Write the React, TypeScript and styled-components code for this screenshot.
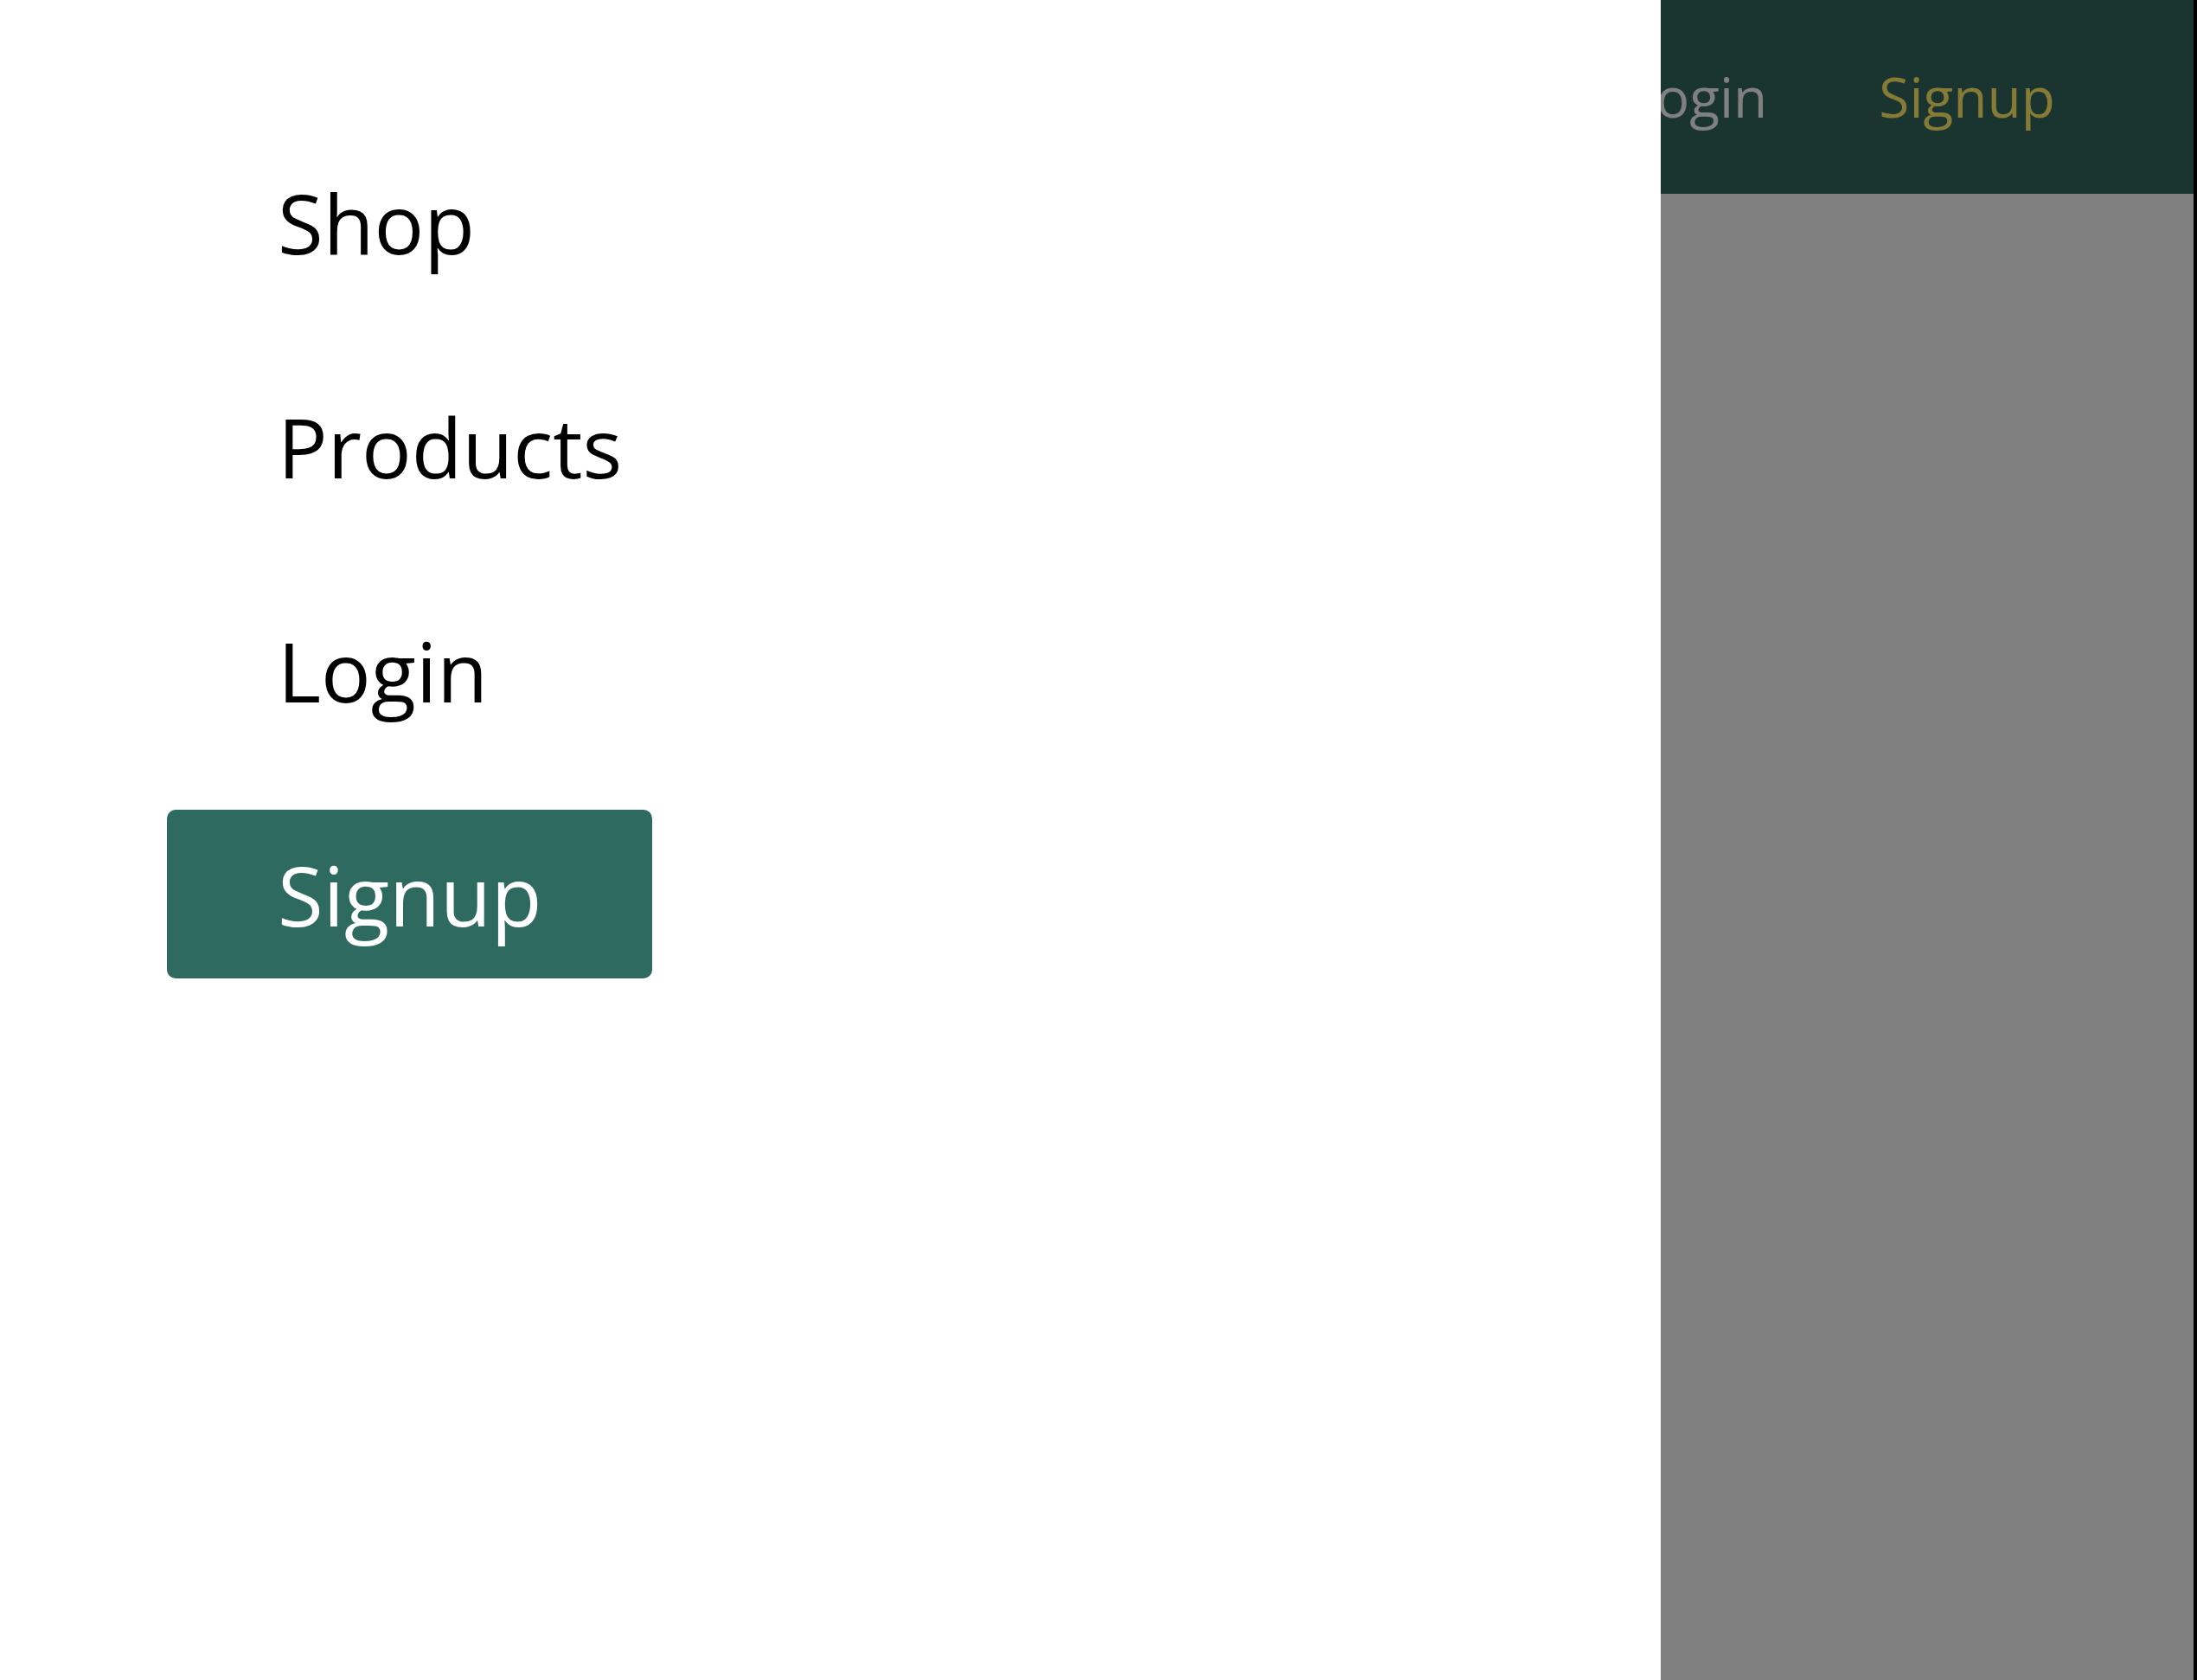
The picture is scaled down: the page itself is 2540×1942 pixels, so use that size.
import React from "react";
import styled, { createGlobalStyle } from "styled-components";

const Global = createGlobalStyle`
  html, body { margin: 0; padding: 0; }
  body {
    font-family: "Open Sans", "Noto Sans", sans-serif;
    width: 2540px;
    height: 1942px;
    overflow: hidden;
  }
`;

const Page = styled.div`
  position: relative;
  width: 2540px;
  height: 1942px;
  box-sizing: border-box;
  border-right: 4px solid #000;
  background: #808080;
  display: flex;
  flex-direction: column;
`;

const Header = styled.header`
  height: 224px;
  background: #1a3430;
  display: flex;
  align-items: center;
  justify-content: flex-end;
  padding-right: 160px;
  gap: 129px;
`;

const HeaderLink = styled.a<{ $accent?: boolean }>`
  font-size: 64px;
  line-height: 224px;
  text-decoration: none;
  color: ${(p) => (p.$accent ? "#867b36" : "#808080")};
`;

const Drawer = styled.nav`
  position: absolute;
  left: 0;
  top: 0;
  bottom: 0;
  width: 1920px;
  background: #ffffff;
  display: flex;
  flex-direction: column;
  align-items: flex-start;
  gap: 64px;
  padding: 159px 0 0 193px;
  box-sizing: border-box;
`;

const DrawerItem = styled.a<{ $primary?: boolean }>`
  display: block;
  height: 195px;
  line-height: 195px;
  padding: 0 128px;
  font-size: 96px;
  text-decoration: none;
  border-radius: 10px;
  color: ${(p) => (p.$primary ? "#ffffff" : "#000000")};
  background: ${(p) => (p.$primary ? "#2e6a5f" : "transparent")};
`;

export default function App() {
  return (
    <>
      <Global />
      <Page>
        <Header>
          <HeaderLink href="#">Shop</HeaderLink>
          <HeaderLink href="#">Products</HeaderLink>
          <HeaderLink href="#">Login</HeaderLink>
          <HeaderLink href="#" $accent>
            Signup
          </HeaderLink>
        </Header>
        <Drawer>
          <DrawerItem href="#">Shop</DrawerItem>
          <DrawerItem href="#">Products</DrawerItem>
          <DrawerItem href="#">Login</DrawerItem>
          <DrawerItem href="#" $primary>
            Signup
          </DrawerItem>
        </Drawer>
      </Page>
    </>
  );
}
